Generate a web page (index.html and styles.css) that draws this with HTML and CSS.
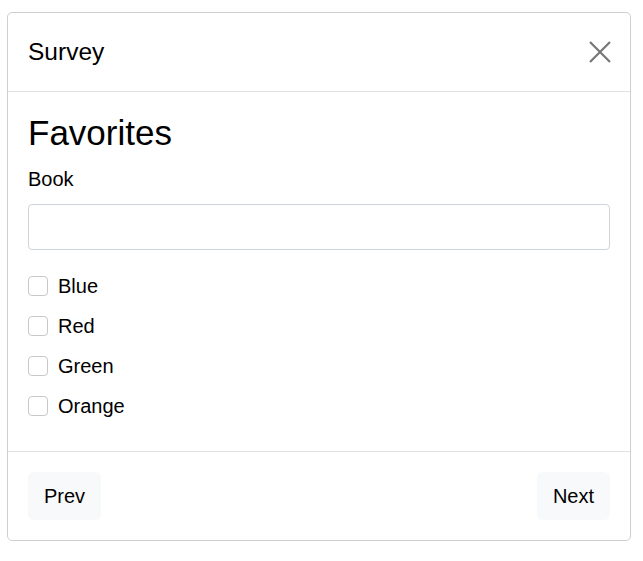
FILE: index.html
```html
<!DOCTYPE html>
<html>
<head>
<meta charset="utf-8">
<link rel="stylesheet" href="styles.css">
</head>
<body>
<div class="page">
  <div class="card">
    <div class="card-header">
      <div class="title">Survey</div>
      <button class="close" aria-label="Close">
        <svg width="24" height="24" viewBox="0 0 24 24"><path d="M2 2 L22 22 M22 2 L2 22" stroke="#777" stroke-width="2.2" fill="none"/></svg>
      </button>
    </div>
    <div class="card-body">
      <h2 class="heading">Favorites</h2>
      <label class="label" for="book">Book</label>
      <input class="input" id="book" type="text">
      <div class="checks">
        <label class="check"><span class="box"></span><span>Blue</span></label>
        <label class="check"><span class="box"></span><span>Red</span></label>
        <label class="check"><span class="box"></span><span>Green</span></label>
        <label class="check"><span class="box"></span><span>Orange</span></label>
      </div>
    </div>
    <div class="card-footer">
      <button class="btn">Prev</button>
      <button class="btn">Next</button>
    </div>
  </div>
</div>
</body>
</html>
```
FILE: styles.css
```css
html, body {
  margin: 0;
  padding: 0;
  background: #fff;
}
body {
  font-family: "Liberation Sans", Arial, sans-serif;
  color: #000;
}
.page {
  padding: 12px 12px 20px 7px;
}
.card {
  border: 1px solid #cfcfcf;
  border-radius: 5px;
  width: 622px;
}
.card-header {
  display: flex;
  align-items: center;
  justify-content: space-between;
  height: 79px;
  padding: 0 20px;
  border-bottom: 1px solid #e2e2e2;
  box-sizing: border-box;
}
.title {
  font-size: 24.5px;
  line-height: 28px;
}
.close {
  background: none;
  border: 0;
  padding: 0;
  margin-right: -2px;
  width: 24px;
  height: 24px;
  display: flex;
}
.card-body {
  padding: 21px 20px 25px 20px;
  display: flex;
  flex-direction: column;
}
.heading {
  margin: 0;
  font-size: 35px;
  font-weight: normal;
  line-height: 40px;
}
.label {
  margin-top: 14px;
  font-size: 20px;
  line-height: 24px;
}
.input {
  margin-top: 13px;
  height: 46px;
  box-sizing: border-box;
  border: 1px solid #ced4da;
  border-radius: 4px;
  width: 100%;
}
.checks {
  margin-top: 16px;
  display: flex;
  flex-direction: column;
}
.check {
  display: flex;
  align-items: center;
  height: 40px;
  font-size: 20px;
  gap: 10px;
}
.box {
  width: 20px;
  height: 20px;
  box-sizing: border-box;
  border: 1px solid #c8c8c8;
  border-radius: 4px;
}
.card-footer {
  display: flex;
  justify-content: space-between;
  padding: 20px 20px 20px 20px;
  border-top: 1px solid #e2e2e2;
}
.btn {
  font-family: "Liberation Sans", Arial, sans-serif;
  font-size: 20px;
  color: #000;
  background: #f8f9fa;
  border: 0;
  border-radius: 6px;
  height: 48px;
  padding: 0 16px;
}
```
